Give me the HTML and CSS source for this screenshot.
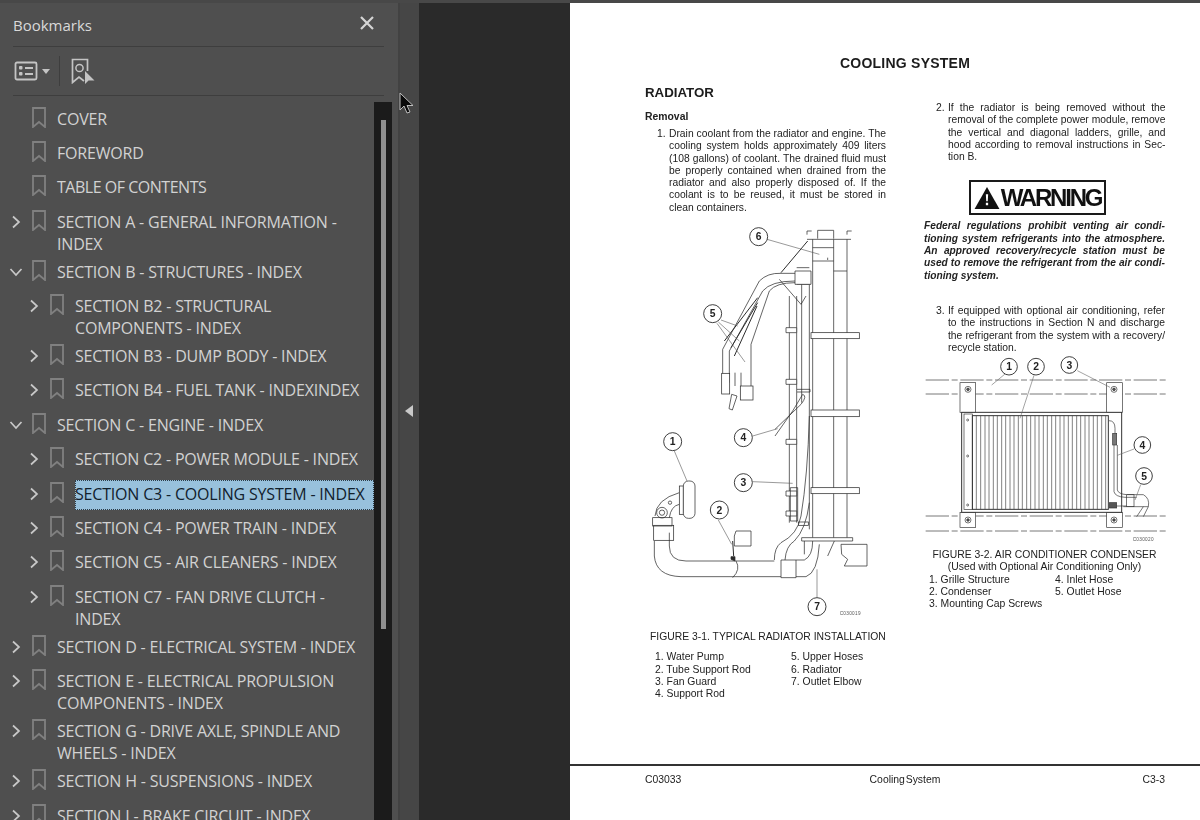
FILE: index.html
```html
<!DOCTYPE html>
<html lang="en">
<head>
<meta charset="utf-8">
<title>Bookmarks</title>
<link rel="stylesheet" href="styles.css">
</head>
<body>
<svg width="0" height="0" class="defs">
  <symbol id="bm" viewBox="0 0 14 21"><path d="M1 1H13V20L7 15L1 20Z" fill="none" stroke="#808080" stroke-width="1.8"/></symbol>
  <symbol id="chev" viewBox="0 0 10 14"><path d="M2 1.5L8 7L2 12.5" fill="none" stroke="#c8c8c8" stroke-width="1.7"/></symbol>
  <symbol id="chevd" viewBox="0 0 14 10"><path d="M1.5 2L7 8L12.5 2" fill="none" stroke="#c8c8c8" stroke-width="1.7"/></symbol>
</svg>
<div class="app">
  <aside class="panel">
    <header class="panel-head">
      <span class="panel-title">Bookmarks</span>
      <svg class="close" viewBox="0 0 14 14" width="14" height="14"><path d="M1 1L13 13M13 1L1 13" stroke="#d5d5d5" stroke-width="2.2"/></svg>
    </header>
    <div class="tools">
      <svg class="tool-list" viewBox="0 0 24 20" width="24" height="20"><rect x="1.5" y="1.5" width="21" height="17" rx="1.5" fill="none" stroke="#c4c4c4" stroke-width="1.8"/><rect x="5" y="5" width="3.5" height="3.5" rx="1" fill="#c4c4c4"/><rect x="5" y="11" width="3.5" height="3.5" rx="1" fill="#c4c4c4"/><path d="M11 7H19M11 13H19" stroke="#c4c4c4" stroke-width="1.8"/></svg>
      <svg class="tool-caret" viewBox="0 0 8 5" width="8" height="5"><path d="M0 0H8L4 5Z" fill="#c4c4c4"/></svg>
      <span class="tool-sep"></span>
      <svg class="tool-find" viewBox="0 0 24 26" width="24" height="26"><path d="M16.5 13V1.5H1.5V24.5L8 19L13 23" fill="none" stroke="#c4c4c4" stroke-width="1.7"/><circle cx="8.5" cy="10" r="3.6" fill="none" stroke="#c4c4c4" stroke-width="1.5"/><path d="M14 13V26L17.5 22.5H23.5Z" fill="#c4c4c4"/></svg>
    </div>
    <div class="tree-wrap">
      <ul class="tree">
        <li class="row"><span class="tw"></span><svg class="bm"><use href="#bm"/></svg><span class="lbl">COVER</span></li>
        <li class="row"><span class="tw"></span><svg class="bm"><use href="#bm"/></svg><span class="lbl">FOREWORD</span></li>
        <li class="row"><span class="tw"></span><svg class="bm"><use href="#bm"/></svg><span class="lbl lbl-tight">TABLE OF CONTENTS</span></li>
        <li class="row"><span class="tw"><svg class="chev"><use href="#chev"/></svg></span><svg class="bm"><use href="#bm"/></svg><span class="lbl">SECTION A - GENERAL INFORMATION -<br>INDEX</span></li>
        <li class="row"><span class="tw"><svg class="chevd"><use href="#chevd"/></svg></span><svg class="bm"><use href="#bm"/></svg><span class="lbl">SECTION B - STRUCTURES - INDEX</span></li>
        <li class="row sub"><span class="tw"><svg class="chev"><use href="#chev"/></svg></span><svg class="bm"><use href="#bm"/></svg><span class="lbl">SECTION B2 - STRUCTURAL<br>COMPONENTS - INDEX</span></li>
        <li class="row sub"><span class="tw"><svg class="chev"><use href="#chev"/></svg></span><svg class="bm"><use href="#bm"/></svg><span class="lbl">SECTION B3 - DUMP BODY - INDEX</span></li>
        <li class="row sub"><span class="tw"><svg class="chev"><use href="#chev"/></svg></span><svg class="bm"><use href="#bm"/></svg><span class="lbl">SECTION B4 - FUEL TANK - INDEXINDEX</span></li>
        <li class="row"><span class="tw"><svg class="chevd"><use href="#chevd"/></svg></span><svg class="bm"><use href="#bm"/></svg><span class="lbl">SECTION C - ENGINE - INDEX</span></li>
        <li class="row sub"><span class="tw"><svg class="chev"><use href="#chev"/></svg></span><svg class="bm"><use href="#bm"/></svg><span class="lbl">SECTION C2 - POWER MODULE - INDEX</span></li>
        <li class="row sub"><span class="tw"><svg class="chev"><use href="#chev"/></svg></span><svg class="bm"><use href="#bm"/></svg><span class="lbl selected">SECTION C3 - COOLING SYSTEM - INDEX</span></li>
        <li class="row sub"><span class="tw"><svg class="chev"><use href="#chev"/></svg></span><svg class="bm"><use href="#bm"/></svg><span class="lbl">SECTION C4 - POWER TRAIN - INDEX</span></li>
        <li class="row sub"><span class="tw"><svg class="chev"><use href="#chev"/></svg></span><svg class="bm"><use href="#bm"/></svg><span class="lbl">SECTION C5 - AIR CLEANERS - INDEX</span></li>
        <li class="row sub"><span class="tw"><svg class="chev"><use href="#chev"/></svg></span><svg class="bm"><use href="#bm"/></svg><span class="lbl">SECTION C7 - FAN DRIVE CLUTCH -<br>INDEX</span></li>
        <li class="row"><span class="tw"><svg class="chev"><use href="#chev"/></svg></span><svg class="bm"><use href="#bm"/></svg><span class="lbl">SECTION D - ELECTRICAL SYSTEM - INDEX</span></li>
        <li class="row"><span class="tw"><svg class="chev"><use href="#chev"/></svg></span><svg class="bm"><use href="#bm"/></svg><span class="lbl">SECTION E - ELECTRICAL PROPULSION<br>COMPONENTS - INDEX</span></li>
        <li class="row"><span class="tw"><svg class="chev"><use href="#chev"/></svg></span><svg class="bm"><use href="#bm"/></svg><span class="lbl">SECTION G - DRIVE AXLE, SPINDLE AND<br>WHEELS - INDEX</span></li>
        <li class="row"><span class="tw"><svg class="chev"><use href="#chev"/></svg></span><svg class="bm"><use href="#bm"/></svg><span class="lbl">SECTION H - SUSPENSIONS - INDEX</span></li>
        <li class="row"><span class="tw"><svg class="chev"><use href="#chev"/></svg></span><svg class="bm"><use href="#bm"/></svg><span class="lbl">SECTION I - BRAKE CIRCUIT - INDEX</span></li>
      </ul>
      <div class="scrollbar"><div class="thumb"></div></div>
    </div>
  </aside>
  <div class="splitter">
    <svg class="handle" viewBox="0 0 8 12" width="8" height="12"><path d="M8 0V12L0 6Z" fill="#c9c9c9"/></svg>
    <svg class="cursor" viewBox="0 0 15 22" width="15" height="22"><path d="M1 1V18L5 14L8 21L11 20L8 13.5H14Z" fill="#0a0a0a" stroke="#bdbdbd" stroke-width="1"/></svg>
  </div>
  <div class="gutter"></div>
  <main class="page">
    <div class="sheet">
      <h1 class="doc-title">COOLING SYSTEM</h1>
      <div class="cols">
        <section class="col">
          <h2 class="h-rad">RADIATOR</h2>
          <h3 class="h-rem">Removal</h3>
          <div class="step">
            <span class="num">1.</span>
            <div class="just">
              <p>Drain coolant from the radiator and engine. The</p>
              <p>cooling system holds approximately 409 liters</p>
              <p>(108 gallons) of coolant. The drained fluid must</p>
              <p>be properly contained when drained from the</p>
              <p>radiator and also properly disposed of. If the</p>
              <p>coolant is to be reused, it must be stored in</p>
              <p class="end">clean containers.</p>
            </div>
          </div>
          <svg class="fig1" viewBox="0 0 810 1200" width="270" height="400">
            <g fill="none" stroke="#2c2c2c" stroke-width="2.2">
              <path d="M528 56V45M528 45H542M662 45H648V56M528 70H660M560 68V43H608V68"/>
              <path d="M545 70V965M608 70V965M648 70V965"/>
              <path d="M545 95H608M545 135H608M608 165H648M590 125V132"/>
              <rect x="540" y="350" width="145" height="18" fill="#fff"/>
              <rect x="540" y="582" width="145" height="20" fill="#fff"/>
              <rect x="540" y="815" width="145" height="18" fill="#fff"/>
              <path d="M512 965H665V975H512Z" fill="#fff"/>
              <path d="M475 240V920M497 240V920M512 200V560M535 200V940M497 155H535M497 205H535"/>
              <path d="M465 335H497V350H465ZM465 490H497V505H465ZM465 670H497V685H465ZM465 825H497V840H465ZM465 885H497V900H465Z" fill="#fff"/>
              <path d="M478 815H500V915H478Z"/>
              <path d="M492 165H540V205H492Z" fill="#fff"/>
              <path d="M275 500V400L385 195Q410 170 450 172H492M295 500V405L395 225Q420 195 492 195"/>
              <path d="M360 510V385L415 225Q435 200 492 200M330 510V470M312 470V510"/>
              <path d="M280 375L380 245M300 395L380 260M310 420L378 270M450 170L530 75" stroke-width="3"/>
              <rect x="272" y="472" width="24" height="62" fill="#fff"/>
              <rect x="328" y="510" width="38" height="42" fill="#fff"/>
              <path d="M302 535L318 540L304 582L294 578Z"/>
              <path d="M498 520H537V528H498M445 190L510 265M525 240L510 265"/>
              <path d="M432 640L510 565Q530 540 515 535L485 585L432 660"/>
              <path d="M535 600Q530 780 510 900M510 900Q500 955 450 980Q430 995 430 1032M535 860Q525 940 490 975Q465 990 462 1032"/>
              <rect x="502" y="918" width="30" height="10"/>
              <path d="M115 950V990Q115 1035 165 1035H430M70 975V1020Q75 1080 150 1082H450M495 1032V1085H450V1032H495M495 1082H525Q560 1070 565 985M495 1032H520Q545 1020 545 975M610 975L590 1020"/>
              <path d="M315 1035Q330 1060 305 1085"/>
              <path d="M72 900Q75 850 145 830M115 905Q120 870 145 865"/>
              <rect x="145" y="810" width="12" height="85" fill="#fff"/>
              <rect x="157" y="795" width="35" height="112" rx="15" fill="#fff"/>
              <circle cx="93" cy="890" r="16"/><circle cx="93" cy="890" r="8"/><circle cx="117" cy="860" r="5"/>
              <rect x="65" y="905" width="58" height="25"/><rect x="68" y="928" width="60" height="45"/>
              <path d="M315 945H360V990H310V960ZM630 985H708V1050H640L650 1030L632 1015Z"/>
              <path d="M520 975V1015"/>
              <path d="M300 1030L312 1035V1022H300Z" fill="#2c2c2c"/>
              <path d="M305 975L308 1020" stroke-width="3"/>
            </g>
            <g fill="none" stroke="#555" stroke-width="1.8">
              <path d="M408 70L565 115M130 705L168 795M262 912L302 985M365 660L440 638M365 797L485 802M558 1144V1060M270 312L320 330M262 318L325 375M258 322L342 438"/>
            </g>
            <g class="callout">
              <circle cx="383" cy="62" r="27"/><text x="383" y="73">6</text>
              <circle cx="245" cy="293" r="27"/><text x="245" y="304">5</text>
              <circle cx="125" cy="677" r="27"/><text x="125" y="688">1</text>
              <circle cx="337" cy="665" r="27"/><text x="337" y="676">4</text>
              <circle cx="337" cy="800" r="27"/><text x="337" y="811">3</text>
              <circle cx="265" cy="882" r="27"/><text x="265" y="893">2</text>
              <circle cx="558" cy="1172" r="27"/><text x="558" y="1183">7</text>
            </g>
            <text class="figcode" x="626" y="1196">C030019</text>
          </svg>
          <p class="cap1">FIGURE 3-1. TYPICAL RADIATOR INSTALLATION</p>
          <div class="legend leg1">
            <div><p>1. Water Pump</p><p>2. Tube Support Rod</p><p>3. Fan Guard</p><p>4. Support Rod</p></div>
            <div><p>5. Upper Hoses</p><p>6. Radiator</p><p>7. Outlet Elbow</p></div>
          </div>
        </section>
        <section class="col col-r">
          <div class="step">
            <span class="num">2.</span>
            <div class="just">
              <p>If the radiator is being removed without the</p>
              <p>removal of the complete power module, remove</p>
              <p>the vertical and diagonal ladders, grille, and</p>
              <p>hood according to removal instructions in Sec-</p>
              <p class="end">tion B.</p>
            </div>
          </div>
          <div class="warn">
            <svg viewBox="0 0 26 23" width="26" height="22"><path d="M13 0L26 23H0Z" fill="#111"/><path d="M11.8 7.5H14.2L13.8 15H12.2Z M11.8 16.5H14.2V19H11.8Z" fill="#fff"/></svg>
            <span>WARNING</span>
          </div>
          <div class="just warn-text">
            <p>Federal regulations prohibit venting air condi-</p>
            <p>tioning system refrigerants into the atmosphere.</p>
            <p>An approved recovery/recycle station must be</p>
            <p>used to remove the refrigerant from the air condi-</p>
            <p class="end">tioning system.</p>
          </div>
          <div class="step step3">
            <span class="num">3.</span>
            <div class="just">
              <p>If equipped with optional air conditioning, refer</p>
              <p>to the instructions in Section N and discharge</p>
              <p>the refrigerant from the system with a recovery/</p>
              <p class="end">recycle station.</p>
            </div>
          </div>
          <svg class="fig2" viewBox="42 15 726 582" width="242" height="194">
            <g fill="none" stroke="#333" stroke-width="2">
              <path class="dash" d="M47 90H767M47 132H767M47 498H767M47 543H767"/>
              <rect x="150" y="98" width="47" height="89" fill="#fff"/>
              <rect x="590" y="98" width="47" height="89" fill="#fff"/>
              <rect x="150" y="487" width="47" height="45" fill="#fff"/>
              <rect x="590" y="487" width="47" height="45" fill="#fff"/>
              <rect x="155" y="187" width="480" height="300" fill="#fff" stroke-width="3"/>
              <rect x="162" y="192" width="25" height="286"/>
              <rect x="187" y="197" width="408" height="281" stroke-width="3"/>
              <circle cx="174" cy="118" r="9"/><circle cx="174" cy="118" r="4" fill="#555"/>
              <circle cx="612" cy="118" r="9"/><circle cx="612" cy="118" r="4" fill="#555"/>
              <circle cx="174" cy="510" r="9"/><circle cx="174" cy="510" r="4" fill="#555"/>
              <circle cx="612" cy="510" r="9"/><circle cx="612" cy="510" r="4" fill="#555"/>
              <circle cx="173" cy="210" r="3"/><circle cx="173" cy="318" r="3"/><circle cx="173" cy="465" r="3"/>
              <path d="M597 212Q615 212 615 235V250M612 285V425Q615 440 645 442H680M622 285V420Q625 432 650 434H700Q720 445 715 470H640M600 468H650M680 500L700 470M700 500L715 470"/>
              <rect x="608" y="250" width="12" height="35" fill="#777"/>
              <rect x="598" y="458" width="22" height="16" fill="#555"/>
              <rect x="650" y="434" width="22" height="36"/>
            </g>
            <path class="fins" d="M199 197V478M212 197V478M225 197V478M237 197V478M250 197V478M262 197V478M275 197V478M287 197V478M300 197V478M312 197V478M325 197V478M337 197V478M350 197V478M362 197V478M375 197V478M387 197V478M400 197V478M412 197V478M425 197V478M437 197V478M450 197V478M462 197V478M475 197V478M487 197V478M500 197V478M512 197V478M525 197V478M537 197V478M550 197V478M562 197V478M575 197V478M587 197V478"/>
            <g fill="none" stroke="#666" stroke-width="1.8">
              <path d="M285 72L245 105M372 76L330 205M502 62L600 112M672 297L622 316M692 404L675 450"/>
            </g>
            <g class="callout">
              <circle cx="297" cy="50" r="25"/><text x="297" y="61">1</text>
              <circle cx="378" cy="50" r="25"/><text x="378" y="61">2</text>
              <circle cx="478" cy="45" r="25"/><text x="478" y="56">3</text>
              <circle cx="697" cy="285" r="25"/><text x="697" y="296">4</text>
              <circle cx="702" cy="378" r="25"/><text x="702" y="389">5</text>
            </g>
            <text class="figcode" x="668" y="573">C030020</text>
          </svg>
          <p class="cap2">FIGURE 3-2. AIR CONDITIONER CONDENSER<br>(Used with Optional Air Conditioning Only)</p>
          <div class="legend leg2">
            <div><p>1. Grille Structure</p><p>2. Condenser</p><p>3. Mounting Cap Screws</p></div>
            <div><p>4. Inlet Hose</p><p>5. Outlet Hose</p></div>
          </div>
        </section>
      </div>
    </div>
    <footer class="foot">
      <span>C03033</span><span class="foot-mid">Cooling System</span><span class="foot-end">C3-3</span>
    </footer>
  </main>
</div>
</body>
</html>
```

FILE: styles.css
```css
* { box-sizing: border-box; }
html, body { margin: 0; height: 100%; overflow: hidden; }
body { background: #2a2a2a; }
.defs { position: absolute; }
p, h1, h2, h3, ul { margin: 0; padding: 0; }
ul { list-style: none; }

.app { display: flex; width: 1200px; height: 820px; overflow: hidden; border-top: 3px solid #484848; }

.panel { width: 398px; flex: none; background: #4f4f4f; padding: 0 0 0 13px; display: flex; flex-direction: column; font-family: "Open Sans", "Noto Sans", sans-serif; color: #d6d6d6; }
.panel-head { height: 44px; width: 371px; border-bottom: 1px solid #3e3e3e; display: flex; align-items: center; justify-content: space-between; padding-right: 10px; padding-bottom: 2px; flex: none; }
.panel-title { font-size: 15px; color: #d9d9d9; margin-top: 3px; }
.close { margin-top: -1px; }
.tools { height: 49px; width: 371px; border-bottom: 1px solid #3e3e3e; display: flex; align-items: center; flex: none; padding-left: 1px; }
.tool-caret { margin-left: 4px; }
.tool-sep { width: 1px; height: 30px; background: #3e3e3e; margin: 0 11px 0 9px; }
.tree-wrap { flex: 1; display: flex; margin-left: -13px; padding-top: 6px; min-height: 0; }
.tree { width: 374px; flex: none; overflow: hidden; padding-top: 2.5px; }
.row { display: flex; align-items: flex-start; min-height: 34.4px; padding-top: 3px; padding-left: 10px; padding-bottom: 3px; font-size: 16px; line-height: 22px; }
.row.sub { padding-left: 28px; }
.tw { width: 22px; height: 22px; flex: none; display: flex; align-items: center; padding-left: 1px; }
.chev { width: 10px; height: 14px; }
.chevd { width: 14px; height: 10px; margin-left: -2px; }
.bm { width: 14px; height: 21px; flex: none; margin-right: 11px; margin-top: -1px; }
.lbl { flex: 1; white-space: nowrap; letter-spacing: -0.19px; color: #d2d2d2; }
.lbl-tight { letter-spacing: -0.48px; }
.selected { background: #98c1dc; color: #11202c; outline: 1px dotted #2c3c48; outline-offset: -1px; margin-top: -3px; padding-top: 3px; padding-bottom: 5px; }
.scrollbar { width: 18px; background: #1b1b1b; flex: none; padding: 18px 6px 0 7px; }
.thumb { height: 509px; background: #8f8f8f; }

.splitter { width: 21px; flex: none; background: #464646; position: relative; border-left: 2px solid #424242; }
.handle { position: absolute; left: 5px; top: 402px; }
.cursor { position: absolute; left: -1px; top: 89px; }
.gutter { width: 151px; flex: none; background: #2a2a2a; }

.page { width: 630px; flex: none; background: #fff; font-family: "Liberation Sans", Arial, sans-serif; color: #222; font-size: 10.4px; line-height: 12.3px; display: flex; flex-direction: column; }
.sheet { flex: none; height: 761px; padding: 51px 35px 0 75px; }
.doc-title { font-size: 14px; line-height: 18px; font-weight: 700; text-align: center; color: #1c1c1c; letter-spacing: 0.24px; }
.cols { display: grid; grid-template-columns: 241px 241px; column-gap: 38px; }
.h-rad { font-size: 13.3px; line-height: 16px; font-weight: 700; color: #1c1c1c; margin-top: 13px; }
.h-rem { font-size: 10.4px; line-height: 12px; font-weight: 700; margin-top: 10px; }
.step { display: flex; padding-left: 12px; margin-top: 5px; }
.num { width: 12px; flex: none; }
.just { flex: 1; font-size: 10.3px; }
.just p { text-align: justify; text-align-last: justify; white-space: nowrap; }
.just p.end { text-align-last: left; }
.fig1 { display: block; margin: 2px 0 0 -14px; overflow: visible; }
.callout circle { fill: #fff; stroke: #222; stroke-width: 2.6; }
.callout text { font-family: "Liberation Sans", Arial, sans-serif; font-size: 31px; fill: #222; text-anchor: middle; font-weight: 700; }
.figcode { font-family: "Liberation Sans", Arial, sans-serif; font-size: 14px; fill: #555; letter-spacing: 1px; }
.cap1 { margin: 15px 0 0 5px; font-size: 10.36px; white-space: nowrap; }
.legend { display: flex; white-space: nowrap; }
.leg1 { margin: 8px 0 0 10px; }
.leg1 > div:first-child { width: 136px; }
.col-r { padding-top: 30px; }
.col-r > .step:first-child { margin-top: 0; }
.warn { width: 137px; height: 35px; border: 2px solid #1a1a1a; margin: 17px 0 0 45px; display: flex; align-items: center; justify-content: center; gap: 1px; font-size: 24px; font-weight: 700; letter-spacing: -2.2px; color: #111; }
.warn-text { font-style: italic; font-weight: 700; margin-top: 5px; font-size: 10.2px; }
.step3 { margin-top: 23px; }
.fig2 { display: block; margin: 1px 0 0; overflow: visible; }
.dash { stroke-dasharray: 70 8 18 8; }
.fins { fill: none; stroke: #444; stroke-width: 2; }
.cap2 { text-align: center; font-size: 10.36px; }
.leg2 { margin: 0 0 0 5px; }
.leg2 > div:first-child { width: 126px; }
.foot { height: 56px; border-top: 2px solid #333; display: grid; grid-template-columns: 1fr auto 1fr; padding: 8px 35px 0 75px; }
.foot-mid { word-spacing: -2px; }
.foot-end { text-align: right; }
.sheet, .foot > span { filter: blur(0.45px); }
```
